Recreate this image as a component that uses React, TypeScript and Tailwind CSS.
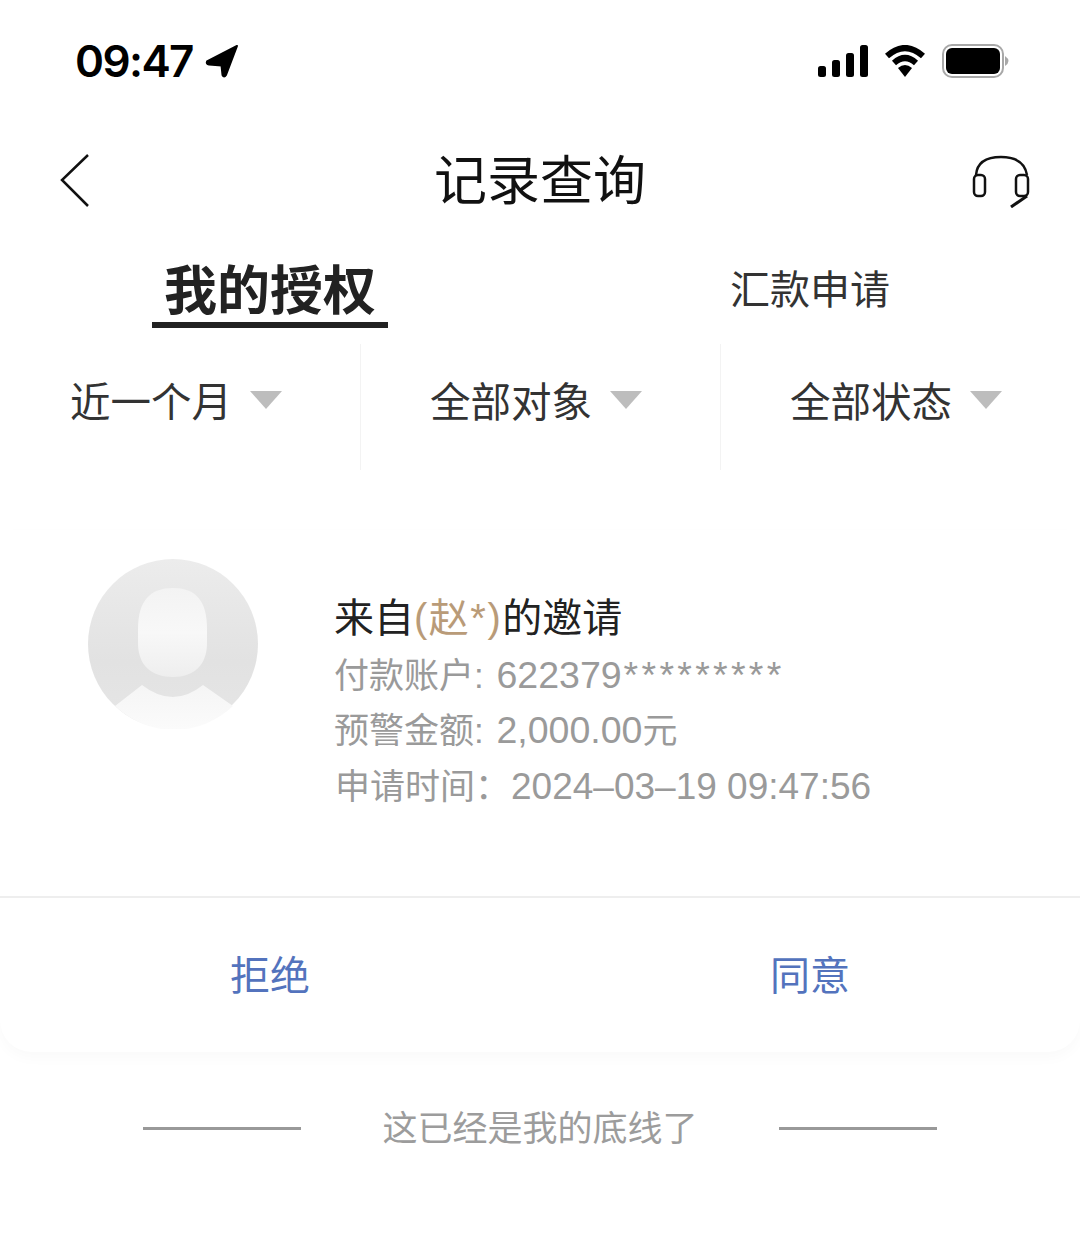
const cjk = "font-['Liberation_Sans','Noto_Sans_CJK_SC',sans-serif]";

const filters = ["近一个月", "全部对象", "全部状态"];

const label = "text-[35px]";
const value = "text-[37.5px]";

function LocationArrow() {
  return (
    <svg width="36" height="36" viewBox="0 0 36 36" className="ml-[11px]">
      <path d="M33 3 L3 18.5 Q2 21 5 21.5 L17.5 22.5 L18.5 32 Q20 35 22 32 Z" fill="#000" stroke="#000" strokeWidth="2" strokeLinejoin="round" />
    </svg>
  );
}

function StatusIcons() {
  return (
    <div className="flex items-center">
      <svg width="50" height="32" viewBox="0 0 50 32">
        <rect x="0" y="21" width="8" height="11" rx="2.5" fill="#000" />
        <rect x="14" y="15" width="8" height="17" rx="2.5" fill="#000" />
        <rect x="28" y="8" width="8" height="24" rx="2.5" fill="#000" />
        <rect x="42" y="0" width="8" height="32" rx="2.5" fill="#000" />
      </svg>
      <svg width="42" height="32" viewBox="0 0 42 32" className="ml-4">
        <path d="M3 11 Q21 -5 39 11" fill="none" stroke="#000" strokeWidth="6" />
        <path d="M10 18 Q21 8 32 18" fill="none" stroke="#000" strokeWidth="6" />
        <path d="M14 23 Q21 17 28 23 L21 32 Z" fill="#000" />
      </svg>
      <svg width="68" height="34" viewBox="0 0 68 34" className="ml-4">
        <rect x="1" y="1" width="60" height="32" rx="9" fill="none" stroke="#a8a8a8" strokeWidth="2" />
        <rect x="4" y="4" width="54" height="26" rx="6" fill="#000" />
        <path d="M63 12 Q70 17 63 22 Z" fill="#a8a8a8" />
      </svg>
    </div>
  );
}

function Headset() {
  return (
    <svg width="60" height="54" viewBox="0 0 60 54" fill="none" stroke="#111" strokeWidth="2.5">
      <path d="M5 21 C6 9 15 3 30 3 C45 3 54 9 56 21" />
      <rect x="3" y="21" width="11" height="21" rx="4" />
      <rect x="45" y="21" width="12" height="21" rx="4" />
      <path d="M56 42 L40 53" strokeWidth="3" />
    </svg>
  );
}

function Avatar() {
  return (
    <svg width="170" height="170" viewBox="0 0 170 170" className="shrink-0">
      <defs>
        <linearGradient id="disc" x1="0" y1="0" x2="0" y2="1">
          <stop offset="0" stopColor="#ececec" />
          <stop offset="0.6" stopColor="#e2e2e2" />
          <stop offset="1" stopColor="#e6e6e6" />
        </linearGradient>
        <linearGradient id="face" x1="0" y1="0" x2="0" y2="1">
          <stop offset="0" stopColor="#f3f3f3" />
          <stop offset="0.5" stopColor="#f8f8f8" />
          <stop offset="1" stopColor="#eeeeee" />
        </linearGradient>
        <linearGradient id="body" x1="0" y1="0" x2="0" y2="1">
          <stop offset="0" stopColor="#f5f5f5" />
          <stop offset="1" stopColor="#fbfbfb" />
        </linearGradient>
      </defs>
      <circle cx="85" cy="85" r="85" fill="url(#disc)" />
      <path d="M50 70 C50 42 62 29 85 29 C108 29 119 42 119 70 L119 84 C119 106 106 118 85 118 C63 118 50 106 50 84 Z" fill="url(#face)" />
      <path d="M27 147 L54 126 Q85 150 115 126 L145 147 A85 85 0 0 1 27 147 Z" fill="url(#body)" />
    </svg>
  );
}

export default function App() {
  return (
    <div className={`w-[1080px] h-[1240px] bg-white overflow-hidden ${cjk}`}>
      {/* Status bar */}
      <div className="h-[122px] flex items-center justify-between pl-[75px] pr-[70px]">
        <div className="flex items-center">
          <span className="font-['Inter',sans-serif] text-[44px] font-semibold text-black leading-none tracking-[-1.6px]">09:47</span>
          <LocationArrow />
        </div>
        <StatusIcons />
      </div>

      {/* Nav */}
      <div className="h-[118px] grid grid-cols-[1fr_auto_1fr] items-center px-[49px]">
        <svg width="32" height="54" viewBox="0 0 32 54" fill="none" stroke="#111" strokeWidth="2.5" className="ml-[10px]">
          <path d="M29 1 L3 26 L29 52" />
        </svg>
        <span className="text-[53px] font-normal leading-none text-[#111]">记录查询</span>
        <div className="justify-self-end">
          <Headset />
        </div>
      </div>

      {/* Tabs */}
      <div className="grid grid-cols-2 h-[88px]">
        <div className="flex flex-col items-center justify-end">
          <span className="text-[53px] font-bold leading-none text-[#222] mb-[4px]">我的授权</span>
          <div className="w-[236px] h-[6px] bg-[#222]" />
        </div>
        <div className="flex items-center justify-center pt-[12px]">
          <span className="text-[40px] leading-none text-[#333]">汇款申请</span>
        </div>
      </div>

      {/* Filters */}
      <div className="grid grid-cols-3 mt-[16px] h-[126px]">
        {filters.map((item, idx) => (
          <div
            key={item}
            className={`flex items-center pb-[8px] ${idx > 0 ? "border-l border-[#f3f3f3] pl-[69px]" : "pl-[70px]"}`}
          >
            <span className="text-[40.5px] leading-none text-[#333]">{item}</span>
            <svg width="32" height="18" viewBox="0 0 32 18" className="ml-[18px] mb-[6px]">
              <path d="M0 0 H32 L16 18 Z" fill="#bdbdbd" />
            </svg>
          </div>
        ))}
      </div>

      {/* Card */}
      <div className="mt-[60px] h-[522px] rounded-b-[32px] shadow-[0_6px_14px_rgba(0,0,0,0.025)] flex flex-col">
        <div className="h-[368px] flex border-b-2 border-[#eeeeee] pl-[88px] pt-[29px]">
          <Avatar />
          <div className="ml-[76px] mt-[36px] flex flex-col text-[#9a9a9a]">
            <div className="text-[40px] leading-[46px] text-[#222]">
              来自<span className="text-[#b99b78] tracking-[1.5px]">(赵*)</span>的邀请
            </div>
            <div className="mt-[12px] h-[44px] leading-[44px]">
              <span className={label}>付款账户: </span>
              <span className={`${value} ml-[3px]`}>622379</span>
              <span className={`${value} tracking-[3.3px] ml-[2px]`}>*********</span>
            </div>
            <div className="mt-[11px] h-[44px] leading-[44px]">
              <span className={label}>预警金额: </span>
              <span className={`${value} ml-[3px]`}>2,000.00</span>
              <span className={label}>元</span>
            </div>
            <div className="mt-[13px] ml-[1px] h-[44px] leading-[44px]">
              <span className={label}>申请时间：</span>
              <span className="text-[37px] ml-[1px]">2024–03–19 09:47:56</span>
            </div>
          </div>
        </div>
        <div className="flex-1 grid grid-cols-2 items-center pt-[2px]">
          <span className="text-center text-[40px] leading-none text-[#5373bd]">拒绝</span>
          <span className="text-center text-[40px] leading-none text-[#5373bd]">同意</span>
        </div>
      </div>

      {/* Footer */}
      <div className="mt-[59px] flex items-center justify-center">
        <div className="w-[158px] h-[3px] bg-[#999999]" />
        <span className="mx-[81px] text-[35px] leading-none text-[#9c9c9c]">这已经是我的底线了</span>
        <div className="w-[158px] h-[3px] bg-[#999999]" />
      </div>
    </div>
  );
}
